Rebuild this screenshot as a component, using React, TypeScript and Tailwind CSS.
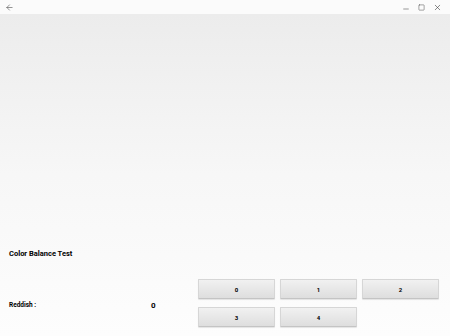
import { ArrowLeft, Minus, Square, X } from "lucide-react";

const keys = ["0", "1", "2", "3", "4"];

export default function App() {
  return (
    <div className="flex h-[336px] w-[450px] flex-col overflow-hidden bg-white font-['Roboto',sans-serif] text-black">
      {/* Title bar */}
      <div className="flex h-[14px] items-center justify-between bg-[#fbfbfb] pl-[5px] pr-[8px]">
        <ArrowLeft className="h-[9px] w-[9px] text-[#444]" strokeWidth={1.5} />
        <div className="flex items-center gap-[8px] text-[#333]">
          <Minus className="mt-[3px] h-[8px] w-[8px]" strokeWidth={1.5} />
          <Square className="h-[7px] w-[7px]" strokeWidth={1.5} />
          <X className="h-[9px] w-[9px]" strokeWidth={1.5} />
        </div>
      </div>

      {/* Body */}
      <div className="flex flex-1 flex-col bg-gradient-to-b from-[#ececec] via-[#f7f7f7] to-[#fdfdfd]">
        <div className="flex-1" />
        <div className="pb-[9px] pl-[9px] pr-[11px]">
          <div className="text-[7.5px] font-bold leading-none">Color Balance Test</div>
          <div className="mt-[22px] flex">
            <div className="flex w-[189px] items-start pt-[23px]">
              <span className="w-[142px] text-[6.5px] font-bold leading-none">Reddish :</span>
              <span className="text-[8px] font-bold leading-none">0</span>
            </div>
            <div className="grid flex-1 grid-cols-3 gap-x-[5px] gap-y-[8px]">
              {keys.map((k) => (
                <button
                  key={k}
                  className="flex h-[20px] items-center justify-center rounded-[1px] border border-[#d6d6d6] border-b-[#c4c4c4] bg-gradient-to-b from-[#f1f1f1] to-[#dedede] text-[6px] font-bold text-black shadow-[0_1px_1px_rgba(0,0,0,0.1)]"
                >
                  {k}
                </button>
              ))}
            </div>
          </div>
        </div>
      </div>
    </div>
  );
}
